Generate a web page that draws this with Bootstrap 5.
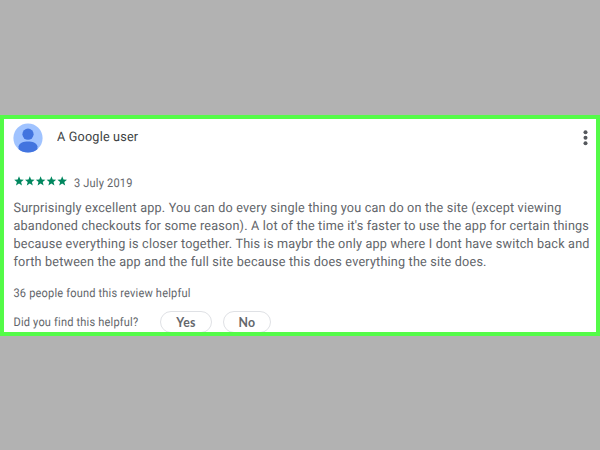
<!DOCTYPE html>
<html lang="en">
<head>
<meta charset="utf-8">
<meta name="viewport" content="width=device-width, initial-scale=1">
<title>App review</title>
<link href="https://cdn.jsdelivr.net/npm/bootstrap@5.3.0/dist/css/bootstrap.min.css" rel="stylesheet">
<style>
body{background:#b2b2b2;font-family:Roboto,"Liberation Sans",sans-serif;color:#62656a;height:450px;padding-top:115px;text-rendering:geometricPrecision}
.review{height:221px;border:4px solid #54fb48;padding:4px 5px 0 9px}
.author,.comment{transform:scaleX(.958);transform-origin:0 0}
.date,.note{transform:scaleX(.919);transform-origin:0 0}
.author{font-size:13.2px;letter-spacing:.2px;color:#3c3f43;line-height:18px;margin-left:14px}
.menu-btn{line-height:0;margin-right:-2px}
.stars{width:55px;height:10px;margin:-4px 0 0 -.5px}
.meta{margin-top:21px;height:18px}
.date{font-size:12px;letter-spacing:.2px;margin:-1px 0 0 6px}
.comment{font-size:13.2px;line-height:18px;letter-spacing:.2px;margin-top:8px;white-space:nowrap;padding-left:.5px}
.note{font-size:12px;line-height:16px;letter-spacing:.2px;padding-left:.5px}
.feedback .note{width:131px;white-space:nowrap}
.found{margin-top:13px}
.feedback{margin-top:10px}
.vote{height:22px;border:1px solid #dfe1e5;border-radius:11px;font:700 12.3px/19px Lato,Roboto,sans-serif;letter-spacing:.3px;color:#64676c;background:#fff;padding:0}
.vote-yes{width:52px;margin-left:16px}
.vote-no{width:48px;margin-left:11px}
</style>
</head>
<body class="overflow-hidden">
<main class="review bg-white overflow-hidden">
  <header class="d-flex align-items-center">
    <svg width="30" height="30" viewBox="0 0 30 30" aria-hidden="true"><circle cx="15" cy="15" r="14.6" fill="#a0c3ff"/><circle cx="15" cy="11.2" r="5.6" fill="#4274df"/><path d="M5.6 23.2C6.6 19.800 10.500 18.500 15 18.500S23.400 19.800 24.400 23.200V26.200Q20.500 29.500 15 29.500T5.600 26.200Z" fill="#4274df"/></svg>
    <div class="author">A Google user</div>
    <button class="menu-btn btn p-0 border-0 ms-auto" aria-label="More options"><svg width="16" height="16" viewBox="0 0 16 16" fill="#55585d"><circle cx="8.500" cy="2.200" r="2"/><circle cx="8.500" cy="7.700" r="2"/><circle cx="8.500" cy="13.200" r="2"/></svg></button>
  </header>
  <div class="meta d-flex align-items-center">
    <svg class="stars" viewBox="-1 0 55 10" fill="#01875f" role="img" aria-label="Five stars">
      <defs><path id="star" d="M5 .200 6.300 3.500 9.800 3.700 7.100 5.900 8 9.400 5 7.500 2 9.400 2.900 5.900.200 3.700 3.700 3.500Z"/></defs>
      <use href="#star"/><use href="#star" x="10.800"/><use href="#star" x="21.600"/><use href="#star" x="32.400"/><use href="#star" x="43.200"/>
    </svg>
    <span class="date">3 July 2019</span>
  </div>
  <div class="comment">Surprisingly excellent app. You can do every single thing you can do on the site (except viewing<br>abandoned checkouts for some reason). A lot of the time it's faster to use the app for certain things<br>because everything is closer together. This is maybr the only app where I dont have switch back and<br>forth between the app and the full site because this does everything the site does.</div>
  <div class="note found">36 people found this review helpful</div>
  <div class="feedback d-flex align-items-center">
    <span class="note flex-shrink-0">Did you find this helpful?</span>
    <button class="vote vote-yes btn">Yes</button>
    <button class="vote vote-no btn">No</button>
  </div>
</main>
</body>
</html>
